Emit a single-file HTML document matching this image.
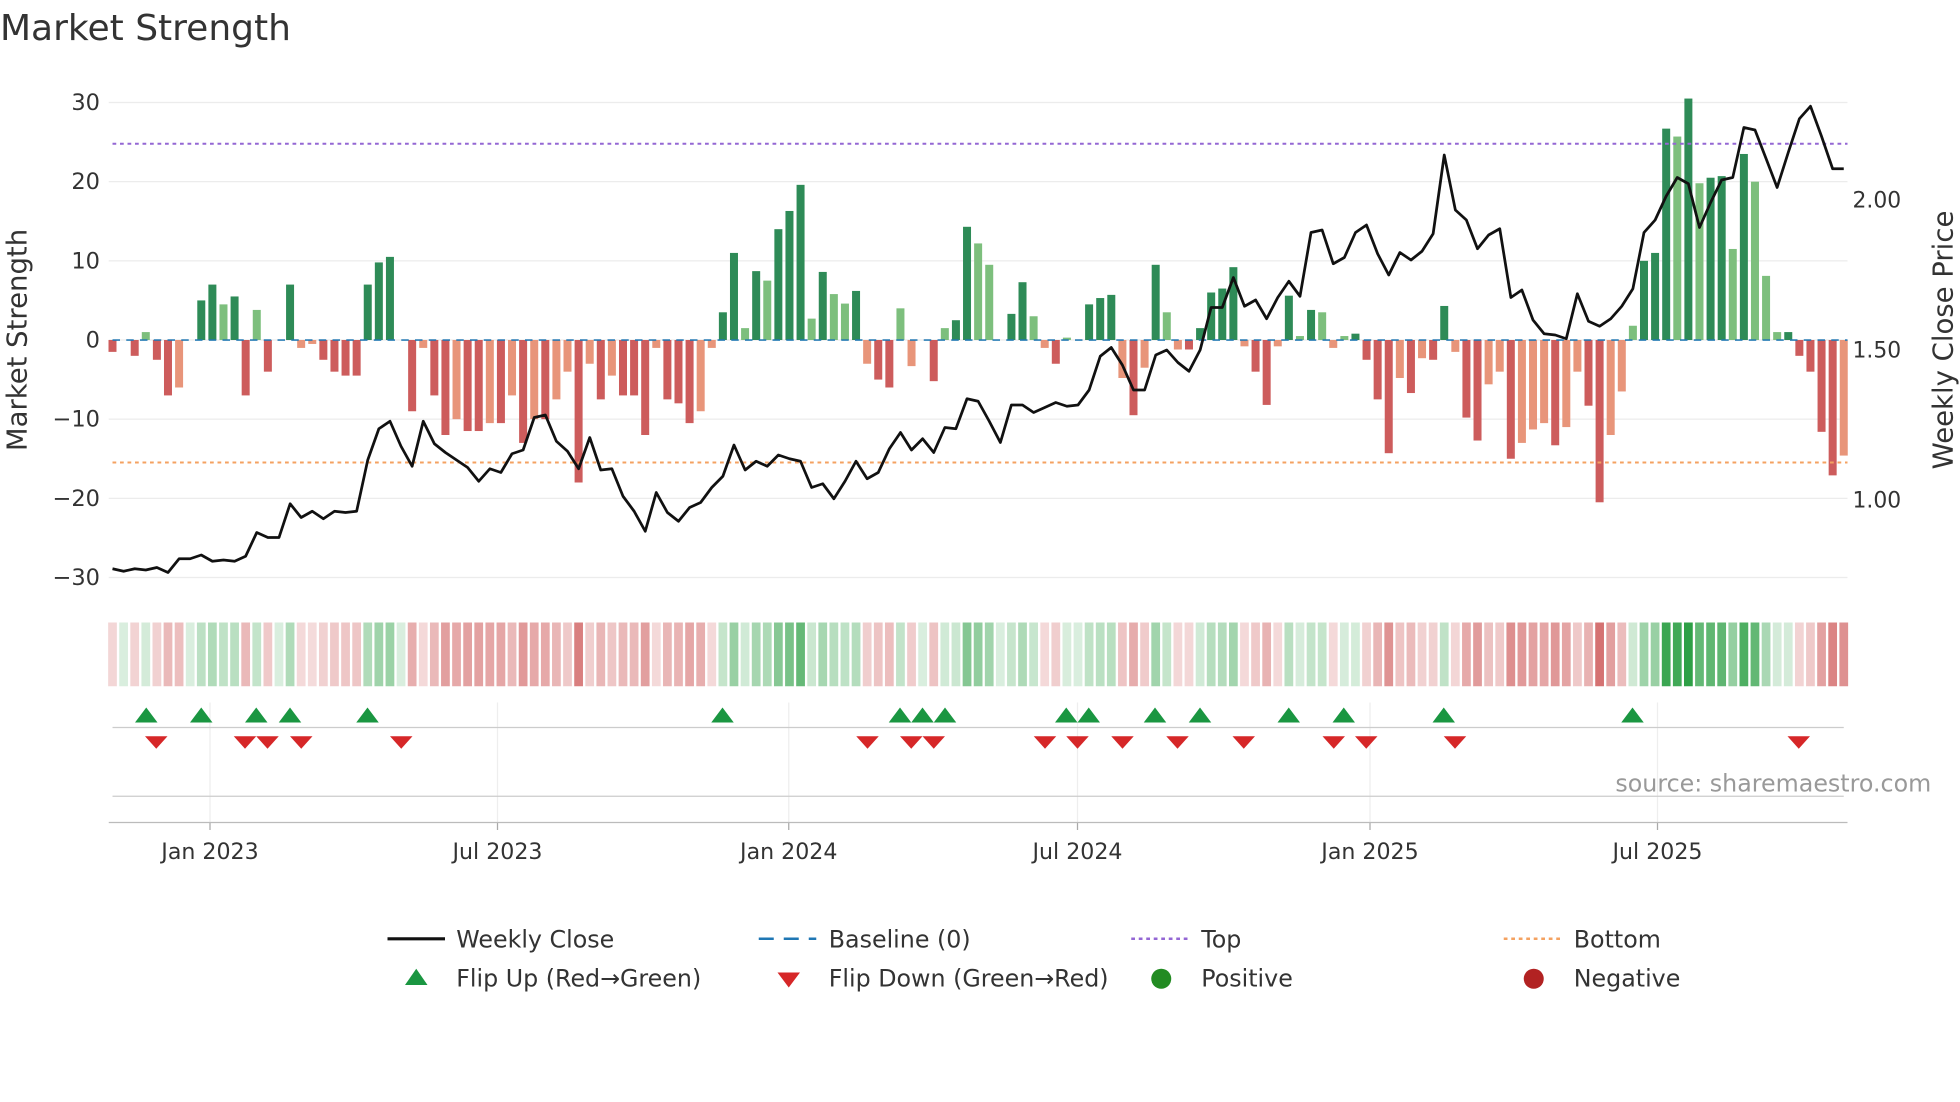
<!DOCTYPE html>
<html><head><meta charset="utf-8"><style>
html,body{margin:0;padding:0;background:#fff}
svg{display:block}
text{font-family:"DejaVu Sans","Liberation Sans",sans-serif;fill:#333}
</style></head><body>
<svg id="s" width="1960" height="1102" viewBox="0 0 1568 881.6" xmlns="http://www.w3.org/2000/svg">
<text x="0" y="32" font-size="28.8">Market Strength</text>
<g id="grid"></g>
<g id="bars"></g>
<line x1="90" y1="272" x2="1478" y2="272" stroke="#1f77b4" stroke-width="1.5" stroke-dasharray="6,5" opacity="0.8"/>
<line x1="90" y1="115" x2="1478" y2="115" stroke="#9467d4" stroke-width="1.6" stroke-dasharray="3,3"/>
<line x1="90" y1="370" x2="1478" y2="370" stroke="#f4a261" stroke-width="1.6" stroke-dasharray="3,3"/>
<polyline id="line" fill="none" stroke="#111" stroke-width="2.2" stroke-linejoin="round"/>
<g id="strip"></g>
<g id="marks"></g>
<text x="1545" y="633" font-size="19" text-anchor="end" style="fill:#999">source: sharemaestro.com</text>
<text transform="translate(21,272) rotate(-90)" font-size="22" text-anchor="middle">Market Strength</text>
<text transform="translate(1562,272) rotate(-90)" font-size="22" text-anchor="middle">Weekly Close Price</text>
<g font-size="17.5">
<text x="1482" y="166">2.00</text><text x="1482" y="286">1.50</text><text x="1482" y="406">1.00</text>
</g>
<g font-size="19">
<line x1="310" y1="751" x2="356" y2="751" stroke="#111" stroke-width="2.5"/><text x="365" y="758">Weekly Close</text>
<line x1="607" y1="751" x2="653" y2="751" stroke="#1f77b4" stroke-width="2" stroke-dasharray="12,8"/><text x="663" y="758">Baseline (0)</text>
<line x1="905" y1="751" x2="951" y2="751" stroke="#9467d4" stroke-width="2" stroke-dasharray="3,3"/><text x="961" y="758">Top</text>
<line x1="1203" y1="751" x2="1249" y2="751" stroke="#f4a261" stroke-width="2" stroke-dasharray="3,3"/><text x="1259" y="758">Bottom</text>
<polygon points="324,788 333,775 342,788" fill="#1a9641"/><text x="365" y="789">Flip Up (Red→Green)</text>
<polygon points="622,778 640,778 631,790" fill="#d62728"/><text x="663" y="789">Flip Down (Green→Red)</text>
<circle cx="929" cy="783" r="8" fill="#228b22"/><text x="961" y="789">Positive</text>
<circle cx="1227" cy="783" r="8" fill="#b22222"/><text x="1259" y="789">Negative</text>
</g>
</svg>
<script>
var V=[-1.5,0,-2,1,-2.5,-7,-6,0,5,7,4.5,5.5,-7,3.8,-4,0,7,-1,-.5,-2.5,-4,-4.5,-4.5,7,9.8,10.5,0,-9,-1,-7,-12,-10,-11.5,-11.5,-10.5,-10.5,-7,-13,-10,-10,-7.5,-4,-18,-3,-7.5,-4.5,-7,-7,-12,-1,-7.5,-8,-10.5,-9,-1,3.5,11,1.5,8.7,7.5,14,16.3,19.6,2.7,8.6,5.8,4.6,6.2,-3,-5,-6,4,-3.3,0,-5.2,1.5,2.5,14.3,12.2,9.5,0,3.3,7.3,3,-1,-3,.3,0,4.5,5.3,5.7,-4.8,-9.5,-3.5,9.5,3.5,-1.2,-1.2,1.5,6,6.5,9.2,-.8,-4,-8.2,-.8,5.6,.5,3.8,3.5,-1,.5,.8,-2.5,-7.5,-14.3,-4.8,-6.7,-2.3,-2.5,4.3,-1.5,-9.8,-12.7,-5.6,-4,-15,-13,-11.3,-10.5,-13.3,-11,-4,-8.3,-20.5,-12,-6.5,1.8,10,11,26.7,25.7,30.5,19.8,20.5,20.7,11.5,23.5,20,8.1,1,1,-2,-4,-11.6,-17.1,-14.6];
var P=[455,457,455,456,454,458,447,447,444,449,448,449,445,426,430,430,403,414,409,415,409,410,409,368,343,337,357,373,337,355,362,368,374,385,375,378,363,360,334,332,353,361,375,350,376,375,397,409,425,394,410,417,406,402,390,381,356,376,369,373,364,367,369,390,387,399,385,369,383,378,359,346,360,351,362,342,343,319,321,337,354,324,324,330,326,322,325,324,312,285,278,292,312,312,284,280,290,297,280,246,246,222,245,240,255,238,225,237,186,184,211,206,186,180,203,220,202,208,201,187,124,168,176,199,188,183,238,232,256,267,268,271,235,257,261,255,245,231,186,176,157,142,147,182,162,144,142,102,104,127,150,122,95,85,109,135,135];
var NS="http://www.w3.org/2000/svg",n=V.length,st=(1475-90)/(n-1);
function el(p,t,a){var e=document.createElementNS(NS,t);for(var k in a)e.setAttribute(k,a[k]);document.getElementById(p).appendChild(e);return e;}
for(var v=-30;v<=30;v+=10){var y=272-v*6.333;el('grid','line',{x1:87,x2:1478,y1:y,y2:y,stroke:'#ececec'});var t=el('grid','text',{x:80,y:y+6,'font-size':18,'text-anchor':'end'});t.textContent=(v<0?'\u2212':'')+Math.abs(v);}
var ticks=[[168,'Jan 2023'],[398,'Jul 2023'],[631,'Jan 2024'],[862,'Jul 2024'],[1096,'Jan 2025'],[1326,'Jul 2025']];
ticks.forEach(function(k){el('grid','line',{x1:k[0],x2:k[0],y1:562,y2:658,stroke:'#eee'});el('grid','line',{x1:k[0],x2:k[0],y1:658,y2:664,stroke:'#aaa'});var t=el('grid','text',{x:k[0],y:687,'font-size':17.7,'text-anchor':'middle'});t.textContent=k[1];});
el('grid','line',{x1:90,x2:1475,y1:582,y2:582,stroke:'#ccc'});
el('grid','line',{x1:90,x2:1475,y1:637,y2:637,stroke:'#ccc'});
el('grid','line',{x1:87,x2:1478,y1:658,y2:658,stroke:'#bbb'});
var pts=[];
for(var i=0;i<n;i++){var x=90+i*st,v=V[i],prev=i?V[i-1]:v;
 var light=Math.abs(v)<Math.abs(prev);
 var c=v>=0?(light?'#7dbf7d':'#2e8b57'):(light?'#e8957a':'#cd5c5c');
 var h=Math.abs(v)*6.333;
 if(h>0.3)el('bars','rect',{x:x-3.2,width:6.4,y:v>=0?272-h:272,height:h,fill:c});
 var a=Math.min(1,0.18+Math.abs(v)/30*0.85);
 var sc=v>=0?'rgba(46,160,70,'+a+')':'rgba(200,70,70,'+a+')';
 el('strip','rect',{x:x-3.5,width:7,y:498,height:51,fill:sc});
 pts.push(x.toFixed(1)+','+P[i]);}
document.getElementById('line').setAttribute('points',pts.join(' '));
[117,161,205,232,294,578,720,738,756,853,871,924,960,1031,1075,1155,1306].forEach(function(x){el('marks','polygon',{points:(x-9)+',578 '+x+',566 '+(x+9)+',578',fill:'#1a9641'});});
[125,196,214,241,321,694,729,747,836,862,898,942,995,1067,1093,1164,1439].forEach(function(x){el('marks','polygon',{points:(x-9)+',589 '+(x+9)+',589 '+x+',599',fill:'#d62728'});});
</script>
</body></html>
